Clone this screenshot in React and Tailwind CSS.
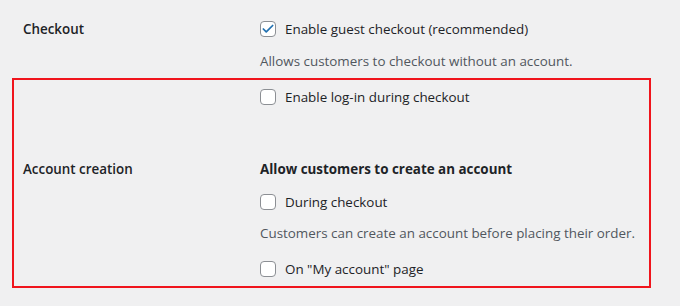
import { Check } from 'lucide-react'

function Box({ checked }) {
  return (
    <span className="flex h-4 w-4 shrink-0 items-center justify-center rounded-[4px] border border-[#8c8f94] bg-white">
      {checked && <Check className="h-3.5 w-3.5 text-[#2271b1]" strokeWidth={3} />}
    </span>
  )
}

function Option({ checked, children, className = '' }) {
  return (
    <label className={`flex h-5 items-center gap-[9px] ${className}`}>
      <Box checked={checked} />
      <span>{children}</span>
    </label>
  )
}

export default function App() {
  return (
    <div className="min-h-[306px] w-[680px] bg-[#f0f0f1] pt-[19px] text-[13.4px] text-[#1d2327] [font-family:'Open_Sans',sans-serif]">
      <div className="grid grid-cols-[260px_1fr]">
        <div className="flex h-5 items-center pl-[23px] font-semibold">Checkout</div>
        <div>
          <Option checked>Enable guest checkout (recommended)</Option>
          <p className="mt-3 flex h-5 items-center text-[#50575e]">Allows customers to checkout without an account.</p>
        </div>
      </div>

      <div className="mt-[7px] ml-3 w-[639px] border-2 border-[#f0141c] pt-[7px] pb-[7px]">
        <div className="grid grid-cols-[246px_1fr]">
          <div />
          <Option>Enable log-in during checkout</Option>
        </div>
        <div className="mt-[52px] grid grid-cols-[246px_1fr]">
          <div className="flex h-5 items-center pl-[9px] font-semibold">Account creation</div>
          <div>
            <div className="flex h-5 items-center font-bold">Allow customers to create an account</div>
            <Option className="mt-[13px]">During checkout</Option>
            <p className="mt-[11px] flex h-5 items-center text-[#50575e]">Customers can create an account before placing their order.</p>
            <Option className="mt-4">On "My account" page</Option>
          </div>
        </div>
      </div>
    </div>
  )
}
